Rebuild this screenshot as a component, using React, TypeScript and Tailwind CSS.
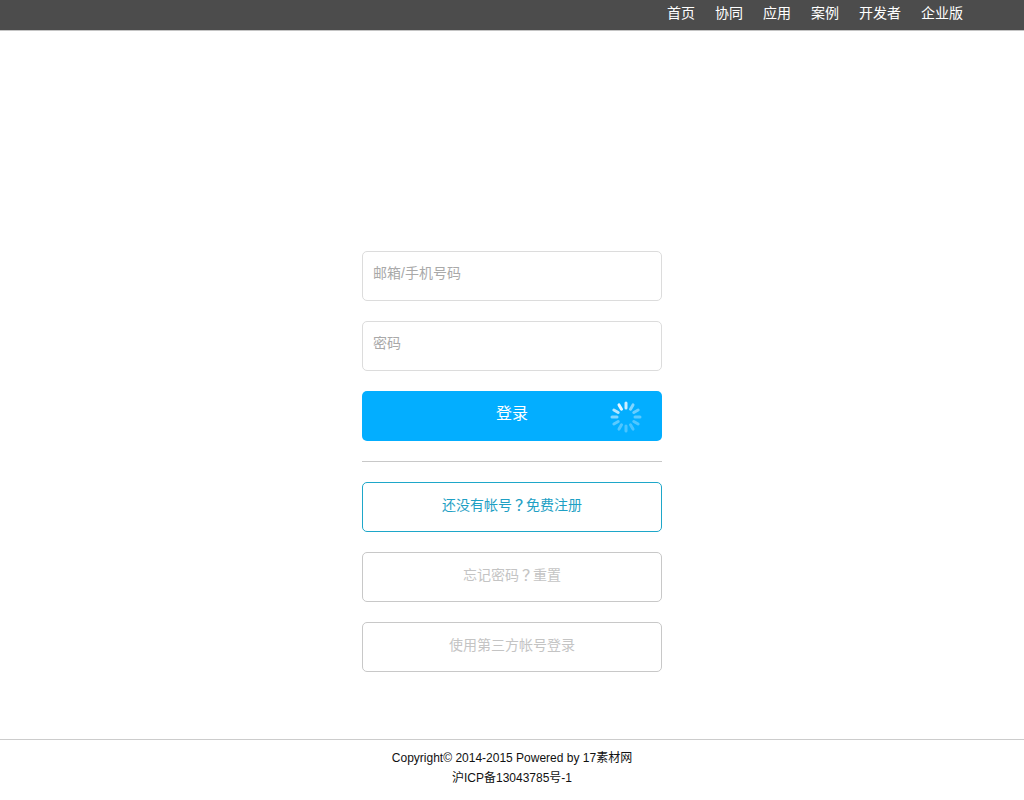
/** 登录页 */
import type { ReactNode } from 'react';

const NAV_ITEMS = ['首页', '协同', '应用', '案例', '开发者', '企业版'];
const FONT = "font-['Liberation_Sans','Noto_Sans_CJK_SC',sans-serif]";

function Spinner() {
  const ticks = Array.from({ length: 12 }, (_, i) => i);
  return (
    <svg width="34" height="34" viewBox="0 0 34 34" className="absolute left-[247px] top-[9px]">
      {ticks.map((i) => (
        <line
          key={i}
          x1="17"
          y1="3"
          x2="17"
          y2="8"
          stroke="#ffffff"
          strokeWidth="3"
          strokeLinecap="round"
          opacity={[0.8, 0.5, 0.4, 0.35, 0.3, 0.28, 0.28, 0.3, 0.35, 0.5, 0.7, 0.9][i]}
          transform={`rotate(${i * 30} 17 17)`}
        />
      ))}
    </svg>
  );
}

function OutlineLink({ children, className }: { children: ReactNode; className: string }) {
  return (
    <div className={`flex h-[50px] items-center justify-center rounded-[5px] border pb-[5px] text-sm ${className}`}>
      <span>{children}</span>
    </div>
  );
}

// 全形問號置中，用 TC 字形
function Mark() {
  return <span className="font-['Noto_Sans_CJK_TC'] font-medium">？</span>;
}

export default function App() {
  return (
    <div className={`min-h-[800px] bg-white ${FONT}`}>
      <header className="flex h-[31px] justify-end gap-5 border-b border-[#c4c4c4] bg-[#4c4c4c] pr-[61px] text-sm leading-[27px] text-white">
        {NAV_ITEMS.map((item) => (
          <a key={item}>{item}</a>
        ))}
      </header>

      <main className="mx-auto flex w-[300px] flex-col pt-[220px]">
        <div className="h-[50px] rounded-[5px] border border-[#dcdcdc] pl-[10px] pt-[11px] text-sm leading-5 text-[#a9a9a9]">
          邮箱/手机号码
        </div>
        <div className="mt-5 h-[50px] rounded-[5px] border border-[#dcdcdc] pl-[10px] pt-[11px] text-sm leading-5 text-[#a9a9a9]">
          密码
        </div>
        <div className="relative mt-5 flex h-[50px] items-center justify-center rounded-[5px] bg-[#03aeff] pb-[5px] text-base text-white">
          登录
          <Spinner />
        </div>
        <div className="mt-5 h-px bg-[#c8c8c8]" />
        <OutlineLink className="mt-5 border-[#1ea7c9] text-[#1ea0c4]">
          还没有帐号<Mark />免费注册
        </OutlineLink>
        <OutlineLink className="mt-5 border-[#c8c8c8] text-[#c4c4c4]">
          忘记密码<Mark />重置
        </OutlineLink>
        <OutlineLink className="mt-5 border-[#c8c8c8] text-[#c4c4c4]">使用第三方帐号登录</OutlineLink>
      </main>

      <footer className="mt-[67px] border-t border-[#cccccc] pt-2 text-center text-xs leading-5 text-[#111111]">
        <p>Copyright© 2014-2015 Powered by 17素材网</p>
        <p>沪ICP备13043785号-1</p>
      </footer>
    </div>
  );
}
